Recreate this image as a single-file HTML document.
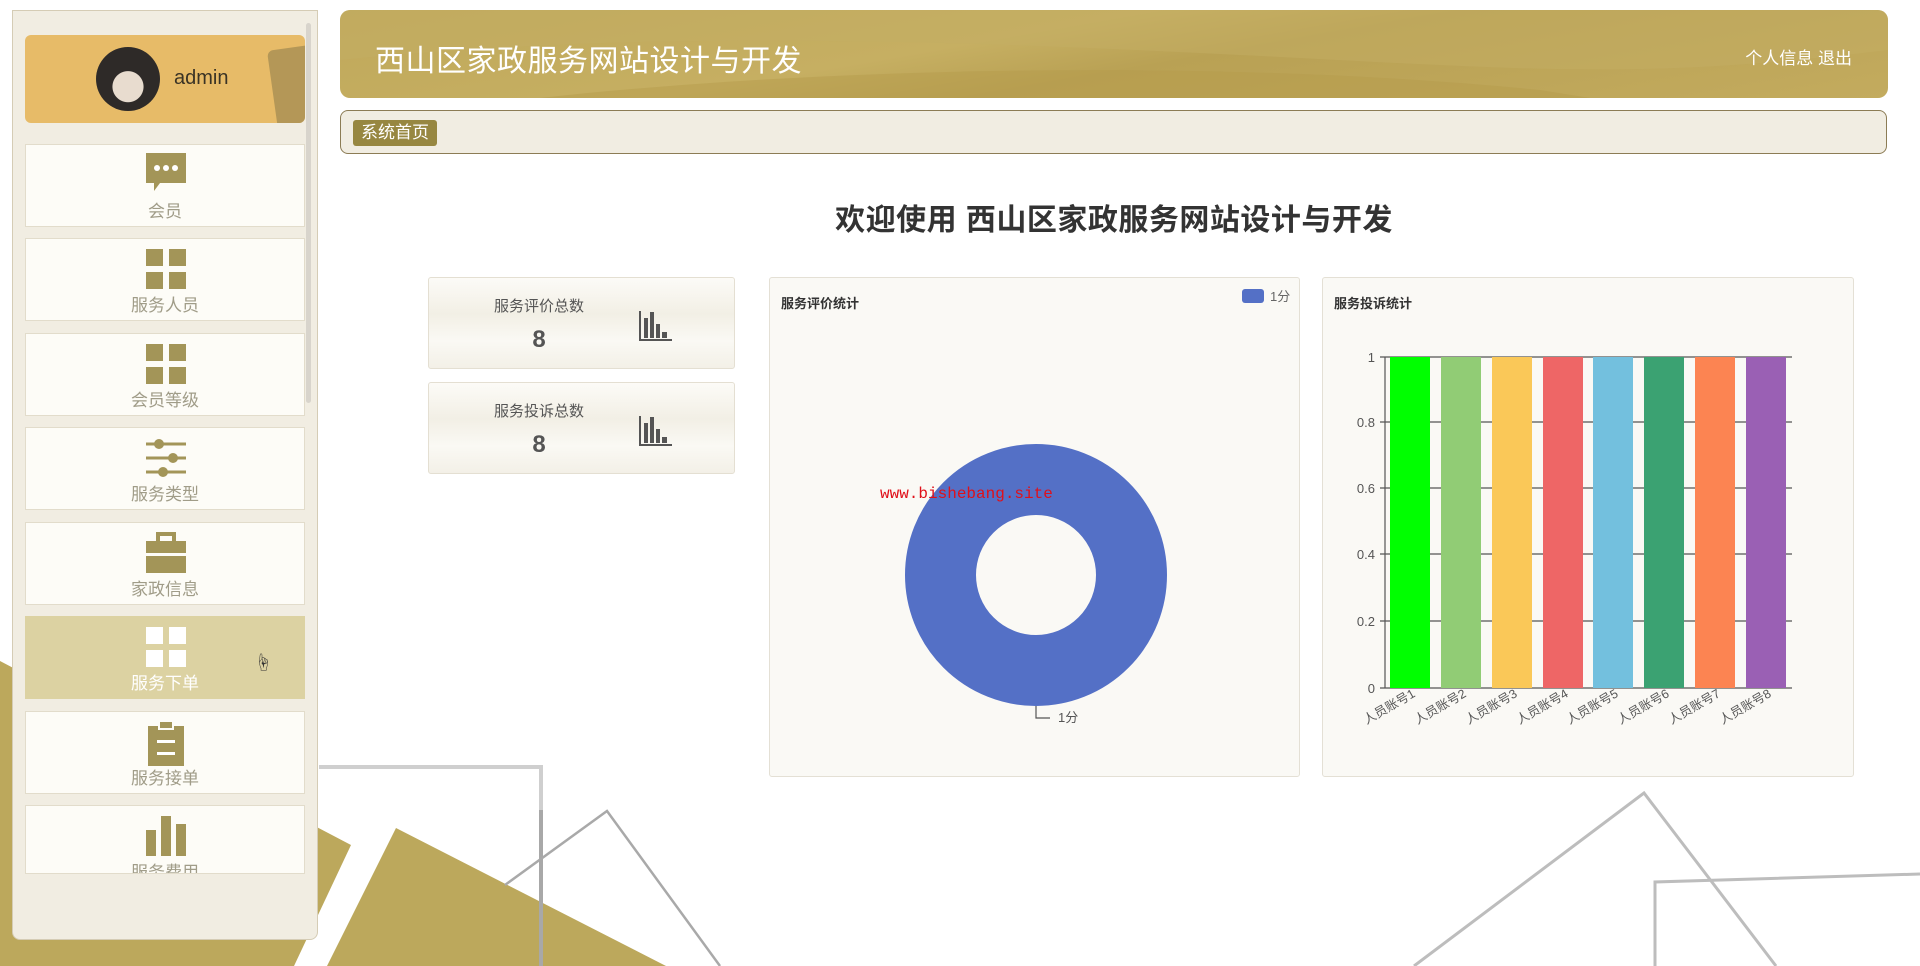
<!DOCTYPE html>
<html><head><meta charset="utf-8"><style>
*{margin:0;padding:0;box-sizing:border-box}
body{width:1920px;height:966px;overflow:hidden;background:#fff;position:relative;font-family:"Liberation Sans","Noto Sans CJK SC",sans-serif}
.abs{position:absolute}
#side{left:12px;top:10px;width:306px;height:930px;background:#f1ede2;border:1px solid #d5ccb5;border-radius:0 0 8px 8px;overflow:hidden}
#user{left:12px;top:24px;width:280px;height:88px;background:#e7bb68;border-radius:6px;overflow:hidden}
#user .sq{position:absolute;right:-18px;top:12px;width:50px;height:90px;background:#b49757;transform:rotate(-8deg);border-radius:6px}
.av{position:absolute;left:71px;top:12px;width:64px;height:64px;border-radius:50%;background:radial-gradient(circle at 50% 62%,#e8dccf 0 30%,#2e2a28 31% 100%)}
.uname{position:absolute;left:149px;top:32px;font-size:20px;color:#3a3325}
.mi{position:absolute;left:12px;width:280px;height:83px;background:#fdfcf7;border:1px solid #e2dccb;text-align:center}
.mi svg{position:absolute;left:120px;top:8px}
.mi span{position:absolute;left:0;right:0;top:52px;font-size:17px;color:#a09c88}
.mi.act{background:#dcd2a2;border-color:#dcd2a2}
.mi.act span{color:#fff}
#hdr{left:340px;top:10px;width:1548px;height:88px;border-radius:10px;background:linear-gradient(170deg,#bfa85a 0%,#c6af62 40%,#b9a154 55%,#c3ab5e 100%);overflow:hidden}
#hdr .t{position:absolute;left:35px;top:26px;font-size:30px;color:#fff;letter-spacing:0.5px}
#hdr .r{position:absolute;right:36px;top:34px;font-size:17px;color:#fff}
#bc{left:340px;top:110px;width:1547px;height:44px;border:1px solid #8c7c55;border-radius:8px;background:#f1ede2}
#bc span{position:absolute;left:12px;top:9px;background:#978741;color:#fff;font-size:17px;padding:1px 8px;border-radius:3px;line-height:24px}
#wel{left:340px;width:1548px;top:195px;text-align:center;font-size:30px;font-weight:bold;color:#333;letter-spacing:0.5px}
.stat{left:428px;width:307px;height:92px;border:1px solid #e4dfd2;border-radius:3px;background:linear-gradient(#fcfbf7,#f2efe5 40%,#faf9f4 70%,#f3f0e7)}
.stat .l{position:absolute;left:0;width:220px;top:17px;text-align:center;font-size:15px;color:#555}
.stat .n{position:absolute;left:0;width:220px;top:48px;text-align:center;font-size:24px;font-weight:bold;color:#555}
.stat svg{position:absolute;left:210px;top:32px}
.card{top:277px;height:500px;border:1px solid #e4e0d5;border-radius:3px;background:#faf9f5}
.card .h{position:absolute;left:11px;top:15px;font-size:13px;font-weight:bold;color:#333}
</style></head><body>
<svg class="abs" style="left:0;top:0" width="1920" height="966">
<polygon points="0,661 351,845 294,966 0,966" fill="#bca85c"/>
<polygon points="396,828 666,966 327,966" fill="#bca85c"/>
<polyline points="319,767 541,767 541,966" fill="none" stroke="#cfcfcf" stroke-width="4"/>
<line x1="541" y1="810" x2="541" y2="966" stroke="#a8a8a8" stroke-width="4"/>
<polyline points="505,885 607,811 720,966" fill="none" stroke="#a9a9a9" stroke-width="2.5"/>
<polyline points="1414,966 1644,793 1776,966" fill="none" stroke="#bdbdbd" stroke-width="3"/>
<polyline points="1655,966 1655,882 1920,874" fill="none" stroke="#bdbdbd" stroke-width="3"/>
</svg>
<div id="side" class="abs">
 <div style="position:absolute;left:293px;top:12px;width:5px;height:380px;background:#d8d4cc;border-radius:3px"></div>
 <div id="user" class="abs"><div class="sq"></div><div class="av"></div><div class="uname">admin</div></div>
 <div class="mi" style="top:133px"><svg width="40" height="44" viewBox="0 0 40 44"><path d="M0 0H40V30H14L8 38V30H0Z" fill="#a39558"/><circle cx="11" cy="15" r="3" fill="#fff"/><circle cx="20" cy="15" r="3" fill="#fff"/><circle cx="29" cy="15" r="3" fill="#fff"/></svg><span>会员</span></div>
 <div class="mi" style="top:227px"><svg width="40" height="44"><rect x="0" y="2" width="17" height="17" fill="#a39558"/><rect x="23" y="2" width="17" height="17" fill="#a39558"/><rect x="0" y="25" width="17" height="17" fill="#a39558"/><rect x="23" y="25" width="17" height="17" fill="#a39558"/></svg><span>服务人员</span></div>
 <div class="mi" style="top:322px"><svg width="40" height="44"><rect x="0" y="2" width="17" height="17" fill="#a39558"/><rect x="23" y="2" width="17" height="17" fill="#a39558"/><rect x="0" y="25" width="17" height="17" fill="#a39558"/><rect x="23" y="25" width="17" height="17" fill="#a39558"/></svg><span>会员等级</span></div>
 <div class="mi" style="top:416px"><svg width="40" height="44"><g stroke="#a39558" stroke-width="3"><line x1="0" y1="8" x2="40" y2="8"/><line x1="0" y1="22" x2="40" y2="22"/><line x1="0" y1="36" x2="40" y2="36"/></g><circle cx="13" cy="8" r="5" fill="#a39558"/><circle cx="27" cy="22" r="5" fill="#a39558"/><circle cx="17" cy="36" r="5" fill="#a39558"/></svg><span>服务类型</span></div>
 <div class="mi" style="top:511px"><svg width="40" height="44"><path d="M12 10V3H28V10" fill="none" stroke="#a39558" stroke-width="4"/><rect x="0" y="10" width="40" height="12" fill="#a39558"/><rect x="0" y="25" width="40" height="17" fill="#a39558"/></svg><span>家政信息</span></div>
 <div class="mi act" style="top:605px"><svg width="40" height="44"><rect x="0" y="2" width="17" height="17" fill="#fff"/><rect x="23" y="2" width="17" height="17" fill="#fff"/><rect x="0" y="25" width="17" height="17" fill="#fff"/><rect x="23" y="25" width="17" height="17" fill="#fff"/></svg><span>服务下单</span><div style="position:absolute;left:228px;top:32px;font-size:18px;color:#333">☝</div></div>
 <div class="mi" style="top:700px"><svg width="40" height="46"><rect x="2" y="6" width="36" height="40" fill="#a39558"/><rect x="13" y="1" width="14" height="8" fill="#a39558" stroke="#fdfcf7" stroke-width="2"/><rect x="11" y="20" width="18" height="3" fill="#fff"/><rect x="11" y="32" width="18" height="3" fill="#fff"/></svg><span>服务接单</span></div>
 <div class="mi" style="top:794px;height:69px;overflow:hidden"><svg width="40" height="44"><rect x="0" y="16" width="10" height="26" fill="#a39558"/><rect x="15" y="2" width="10" height="40" fill="#a39558"/><rect x="30" y="10" width="10" height="32" fill="#a39558"/></svg><span>服务费用</span></div>
</div>
<div id="hdr" class="abs">
 <svg class="abs" style="left:0;top:0" width="1548" height="88"><path d="M0 50 C300 20 600 30 900 45 S1300 70 1548 40 V0H0Z" fill="#c4ad63" opacity=".5"/><path d="M200 88 C500 55 900 50 1200 80 L1250 88Z" fill="#b59c4c" opacity=".5"/></svg>
 <div class="t">西山区家政服务网站设计与开发</div><div class="r">个人信息 退出</div></div>
<div id="bc" class="abs"><span>系统首页</span></div>
<div id="wel" class="abs">欢迎使用 西山区家政服务网站设计与开发</div>
<div class="stat abs" style="top:277px"><div class="l">服务评价总数</div><div class="n">8</div><svg width="34" height="32"><path d="M1 1V30H33" fill="none" stroke="#555" stroke-width="2"/><rect x="5" y="8" width="4" height="20" fill="#555"/><rect x="11" y="2" width="4" height="26" fill="#555"/><rect x="17" y="14" width="4" height="14" fill="#555"/><rect x="23" y="22" width="5" height="6" fill="#555"/></svg></div>
<div class="stat abs" style="top:382px"><div class="l">服务投诉总数</div><div class="n">8</div><svg width="34" height="32"><path d="M1 1V30H33" fill="none" stroke="#555" stroke-width="2"/><rect x="5" y="8" width="4" height="20" fill="#555"/><rect x="11" y="2" width="4" height="26" fill="#555"/><rect x="17" y="14" width="4" height="14" fill="#555"/><rect x="23" y="22" width="5" height="6" fill="#555"/></svg></div>
<div class="card abs" style="left:769px;width:531px"><div class="h">服务评价统计</div>
 <svg class="abs" style="left:0;top:0" width="531" height="500">
 <rect x="472" y="11" width="22" height="14" rx="3" fill="#5470c6"/><text x="500" y="23" font-size="13" fill="#666" font-family="Liberation Sans,Noto Sans CJK SC,sans-serif">1分</text>
 <circle cx="266" cy="297" r="95.5" fill="none" stroke="#5470c6" stroke-width="71"/>
 <path d="M266 428V440H280" fill="none" stroke="#555" stroke-width="1.2"/>
 <text x="288" y="444" font-size="13" fill="#555" font-family="Liberation Sans,Noto Sans CJK SC,sans-serif">1分</text>
 <text x="110" y="220" font-size="16" fill="#e0101a" font-family="Liberation Mono,monospace">www.bishebang.site</text>
 </svg></div>
<div class="card abs" style="left:1322px;width:532px"><div class="h">服务投诉统计</div>
 <svg class="abs" style="left:0;top:0" width="532" height="500" font-family="Liberation Sans,Noto Sans CJK SC,sans-serif">
 <g stroke="#555" stroke-width="1.2">
 <line x1="57" y1="79" x2="469" y2="79"/><line x1="57" y1="144" x2="469" y2="144"/><line x1="57" y1="210" x2="469" y2="210"/><line x1="57" y1="276" x2="469" y2="276"/><line x1="57" y1="343" x2="469" y2="343"/><line x1="57" y1="410" x2="469" y2="410"/><line x1="62" y1="79" x2="62" y2="410"/>
 </g>
 <g font-size="13" fill="#555" text-anchor="end"><text x="52" y="84">1</text><text x="52" y="149">0.8</text><text x="52" y="215">0.6</text><text x="52" y="281">0.4</text><text x="52" y="348">0.2</text><text x="52" y="415">0</text></g>
 <rect x="67" y="79" width="40" height="331" fill="#00ff00"/>
 <rect x="118" y="79" width="40" height="331" fill="#91cc75"/>
 <rect x="169" y="79" width="40" height="331" fill="#fac858"/>
 <rect x="220" y="79" width="40" height="331" fill="#ee6666"/>
 <rect x="270" y="79" width="40" height="331" fill="#73c0de"/>
 <rect x="321" y="79" width="40" height="331" fill="#3ba272"/>
 <rect x="372" y="79" width="40" height="331" fill="#fc8452"/>
 <rect x="423" y="79" width="40" height="331" fill="#9a60b4"/>
 <g font-size="12.5" fill="#555" text-anchor="end">
 <text transform="translate(93,418) rotate(-30)">人员账号1</text><text transform="translate(144,418) rotate(-30)">人员账号2</text><text transform="translate(195,418) rotate(-30)">人员账号3</text><text transform="translate(246,418) rotate(-30)">人员账号4</text><text transform="translate(296,418) rotate(-30)">人员账号5</text><text transform="translate(347,418) rotate(-30)">人员账号6</text><text transform="translate(398,418) rotate(-30)">人员账号7</text><text transform="translate(449,418) rotate(-30)">人员账号8</text>
 </g>
 </svg></div>
</body></html>
